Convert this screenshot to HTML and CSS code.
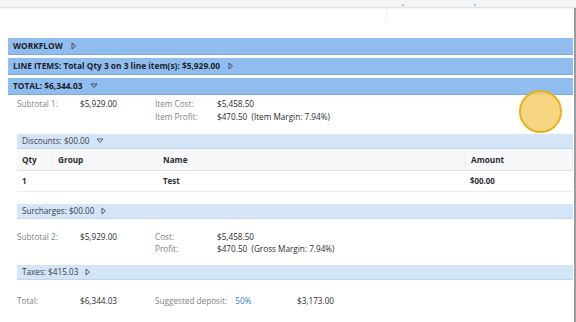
FILE: index.html
```html
<!DOCTYPE html>
<html>
<head>
<meta charset="utf-8">
<link rel="stylesheet" href="styles.css">
</head>
<body>
<div class="topbar">
  <span class="caret">⌄</span>
  <span class="dot"></span>
</div>
<div class="topline"></div>
<div class="page">
  <div class="bar"><span>WORKFLOW</span><svg class="tri" width="6" height="8" viewBox="0 0 6 8"><path d="M1 1 L4.5 4 L1 7 Z" fill="none" stroke="#3b4250" stroke-width="0.9"/></svg></div>
  <div class="bar"><span>LINE ITEMS: Total Qty 3 on 3 line item(s): $5,929.00</span><svg class="tri" width="6" height="8" viewBox="0 0 6 8"><path d="M1 1 L4.5 4 L1 7 Z" fill="none" stroke="#3b4250" stroke-width="0.9"/></svg></div>
  <div class="bar"><span>TOTAL: $6,344.03</span><svg class="tri" width="8" height="6" viewBox="0 0 8 6"><path d="M1 1 L7 1 L4 4.5 Z" fill="none" stroke="#3b4250" stroke-width="0.9"/></svg></div>

  <div class="inner">
    <div class="summary s1">
      <span class="lbl">Subtotal 1:</span>
      <span class="val">$5,929.00</span>
      <span class="lbl">Item Cost:</span>
      <span class="val">$5,458.50</span>
      <span></span><span></span>
      <span class="lbl">Item Profit:</span>
      <span class="val">$470.50 &nbsp;(Item Margin: 7.94%)</span>
    </div>

    <div class="subbar"><span>Discounts: $00.00</span><svg class="tri" width="8" height="6" viewBox="0 0 8 6"><path d="M1 1 L7 1 L4 4.5 Z" fill="none" stroke="#4a5160" stroke-width="0.9"/></svg></div>
    <div class="table">
      <div class="row head">
        <div class="c qty">Qty</div>
        <div class="c grp">Group</div>
        <div class="c name">Name</div>
        <div class="c amt">Amount</div>
      </div>
      <div class="row body">
        <div class="c qty">1</div>
        <div class="c grp"></div>
        <div class="c name">Test</div>
        <div class="c amt">$00.00</div>
      </div>
    </div>

    <div class="subbar"><span>Surcharges: $00.00</span><svg class="tri" width="6" height="8" viewBox="0 0 6 8"><path d="M1 1 L4.5 4 L1 7 Z" fill="none" stroke="#4a5160" stroke-width="0.9"/></svg></div>

    <div class="summary s2">
      <span class="lbl">Subtotal 2:</span>
      <span class="val">$5,929.00</span>
      <span class="lbl">Cost:</span>
      <span class="val">$5,458.50</span>
      <span></span><span></span>
      <span class="lbl">Profit:</span>
      <span class="val">$470.50 &nbsp;(Gross Margin: 7.94%)</span>
    </div>

    <div class="subbar"><span>Taxes: $415.03</span><svg class="tri" width="6" height="8" viewBox="0 0 6 8"><path d="M1 1 L4.5 4 L1 7 Z" fill="none" stroke="#4a5160" stroke-width="0.9"/></svg></div>

    <div class="totalrow">
      <span class="lbl">Total:</span>
      <span class="val">$6,344.03</span>
      <span class="lbl dep">Suggested deposit: <span class="pct">50%</span></span>
      <span class="val">$3,173.00</span>
    </div>
  </div>
</div>
<div class="edge"></div>
<div class="cursor"></div>
</body>
</html>
```

FILE: styles.css
```css
html, body {
  margin: 0;
  padding: 0;
  background: #ffffff;
}
body {
  font-family: "Open Sans", "DejaVu Sans", sans-serif;
  font-size: 8.2px;
  color: #222;
  width: 576px;
  height: 322px;
  overflow: hidden;
  position: relative;
}
.topbar {
  height: 7px;
  background: #f4f5f7;
  border-bottom: 1px solid #e1e3e7;
  box-shadow: 0 1px 2px rgba(0,0,0,0.06);
  position: relative;
}
.caret {
  position: absolute;
  left: 400px;
  top: 0px;
  font-size: 7px;
  line-height: 8px;
  color: #8a8d93;
}
.dot {
  position: absolute;
  left: 474px;
  top: 4px;
  width: 2px;
  height: 2px;
  background: #b9c3d6;
}
.topline {
  position: absolute;
  left: 386px;
  top: 9px;
  width: 1px;
  height: 12px;
  background: #eceef1;
}
.page {
  padding: 30px 3px 0 8px;
}
.bar {
  height: 16px;
  line-height: 16px;
  background: #90bdf0;
  border-bottom: 1px solid #7ea8d8;
  margin-bottom: 3px;
  padding-left: 5px;
  font-weight: 700;
  font-size: 8.35px;
  color: #1b1f26;
  display: flex;
  align-items: center;
  gap: 8px;
}
.tri {
  display: block;
  flex: none;
}
.inner {
  padding-left: 9px;
}
.summary {
  display: grid;
  grid-template-columns: 63px 75px 62px 1fr;
  align-content: start;
  line-height: 12px;
  box-sizing: border-box;
}
.s1 {
  row-gap: 1px;
  padding-top: 0;
  height: 36px;
}
.s2 {
  row-gap: 0;
  padding-top: 12px;
  height: 46px;
}
.lbl {
  color: #808389;
}
.val {
  color: #2a2d33;
}
.subbar {
  height: 14px;
  line-height: 14px;
  background: #d4e5f7;
  border-bottom: 1px solid #c3d6ec;
  padding-left: 5px;
  color: #3a3f48;
  display: flex;
  align-items: center;
  gap: 7px;
}
.table {
  margin-bottom: 12px;
}
.row {
  display: grid;
  grid-template-columns: 35px 106px 307px 1fr;
}
.row.head {
  height: 22px;
  box-sizing: border-box;
  background: #f7f8fa;
  border-bottom: 1px solid #dfe2e6;
  font-weight: 700;
  color: #2a2d33;
}
.row.body {
  height: 21px;
  box-sizing: border-box;
  border-bottom: 1px solid #eceef1;
  font-weight: 700;
  color: #2a2d33;
  font-size: 7.9px;
}
.c {
  display: flex;
  align-items: center;
  padding-left: 5px;
}
.row.head .c.grp,
.row.head .c.amt {
  border-left: 1px solid #eceef1;
}
.row.head .c.amt {
  border-right: 1px solid #eceef1;
}
.totalrow {
  display: grid;
  grid-template-columns: 63px 75px 142px 1fr;
  padding-top: 15px;
  line-height: 12px;
}
.lbl .pct {
  color: #2f80d0;
  margin-left: 6px;
}
.edge {
  position: absolute;
  right: 0;
  top: 8px;
  width: 2px;
  height: 314px;
  background: #9a9ca0;
}
.cursor {
  position: absolute;
  left: 519px;
  top: 90px;
  width: 43px;
  height: 43px;
  border-radius: 50%;
  background: rgba(244, 207, 106, 0.85);
  border: 2px solid #e6b21c;
  box-sizing: border-box;
}
```
